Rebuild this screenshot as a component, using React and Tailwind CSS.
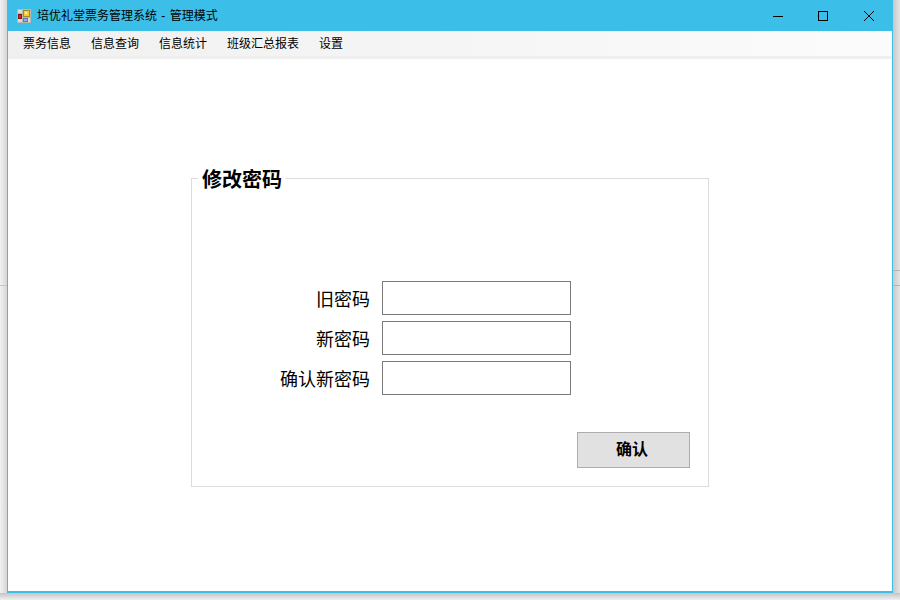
export default function App() {
  const menu = ["票务信息", "信息查询", "信息统计", "班级汇总报表", "设置"];
  const rows = ["旧密码", "新密码", "确认新密码"];
  return (
    <div className="relative flex h-[600px] w-[900px] flex-col overflow-hidden bg-[#e6e6e6] font-['Liberation_Sans','Noto_Sans_CJK_SC',sans-serif] text-black">
      <div className="absolute inset-y-0 left-0 w-[7px] bg-gradient-to-r from-[#f2f2f2] to-[#d6d6d6]" />
      <div className="absolute inset-y-0 right-0 w-[7px] bg-gradient-to-r from-[#c8c8c8] to-[#e4e4e4]" />
      <div className="absolute inset-x-0 bottom-0 h-[7px] bg-gradient-to-b from-[#c4c4c4] to-[#f0f0f0]" />
      <div className="absolute left-[893px] top-[270px] h-px w-[7px] bg-[#b4b4b4]" />
      <div className="absolute left-[893px] top-[285px] h-px w-[7px] bg-[#b4b4b4]" />
      <div className="absolute left-0 top-[285px] h-px w-[7px] bg-[#c4c4c4]" />
      <div className="relative ml-[7px] flex h-[593px] w-[886px] flex-col border-x border-b-2 border-[#3bbfe8] bg-white">
        <header className="-mx-px flex h-[31px] shrink-0 items-center bg-[#3bbfe8] text-xs">
          <svg className="ml-[10px] shrink-0" width="14" height="14" viewBox="0 0 14 14">
            <rect width="14" height="14" fill="#b8b8b0" />
            <rect x="1" y="1" width="12" height="12" fill="#dcdcd0" />
            <path d="M5.5 0V14M0 4.5H5M6 8.5H14" stroke="#b8b8b0" strokeWidth="1" />
            <rect x="6" y="1" width="7" height="7" fill="#a88a20" />
            <rect x="7" y="2" width="5" height="5" fill="#f6cc30" />
            <rect x="8" y="3" width="2" height="2" fill="#fff0a0" />
            <rect x="1" y="5" width="4" height="5" fill="#801818" />
            <rect x="2" y="6" width="2" height="3" fill="#e02020" />
            <rect x="6" y="9" width="5" height="4" fill="#5a78c8" />
            <rect x="7" y="10" width="3" height="2" fill="#8cb0f0" />
          </svg>
          <span className="ml-[6px] leading-none [word-spacing:1px]">培优礼堂票务管理系统 - 管理模式</span>
          <div className="ml-auto flex items-center">
            <svg className="mr-[35px]" width="10" height="10" viewBox="0 0 10 10">
              <path d="M0 5.5H10" stroke="#000" strokeWidth="1" />
            </svg>
            <svg className="mr-[36px]" width="10" height="10" viewBox="0 0 10 10">
              <rect x="0.5" y="0.5" width="9" height="9" fill="none" stroke="#000" strokeWidth="1" />
            </svg>
            <svg className="mr-[19px]" width="10" height="10" viewBox="0 0 10 10">
              <path d="M0 0L10 10M10 0L0 10" stroke="#000" strokeWidth="1" />
            </svg>
          </div>
        </header>
        <nav className="box-content flex h-[25px] shrink-0 items-center gap-5 border-b-[3px] border-[#efefef] bg-gradient-to-r from-[#f0f0f0] to-[#fbfbfb] pl-[15px] text-xs">
          {menu.map((m) => (
            <span key={m}>{m}</span>
          ))}
        </nav>
        <main className="flex flex-1 flex-col pl-[183px] pt-[111px]">
          <fieldset className="h-[317px] w-[518px] border border-[#dcdcdc]">
            <legend className="ml-[6px] h-[16px] px-1 text-xl font-bold leading-[20px]">修改密码</legend>
            <div className="flex flex-col gap-[6px] pt-[95px]">
              {rows.map((r) => (
                <div key={r} className="flex w-[379px] items-center justify-end gap-3">
                  <label className="pt-1 text-lg leading-none">{r}</label>
                  <input className="h-[34px] w-[189px] border border-[#7a7a7a] bg-white" type="text" />
                </div>
              ))}
            </div>
            <div className="flex justify-end pr-[18px] pt-[37px]">
              <button className="h-[36px] w-[113px] border border-[#adadad] bg-[#e1e1e1] pr-[3px] text-base font-bold">确认</button>
            </div>
          </fieldset>
        </main>
      </div>
    </div>
  );
}
